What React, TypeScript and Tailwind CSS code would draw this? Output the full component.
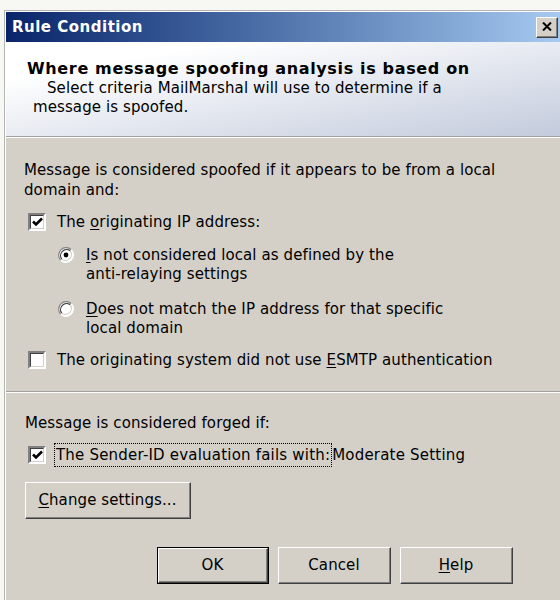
import type { ReactNode } from "react"

// Classic sunken check box
function CheckBox({ checked }: { checked: boolean }) {
  return (
    <div className="w-[18px] h-[18px] shrink-0 border-t-2 border-l-2 border-t-[#808080] border-l-[#808080] border-b-2 border-r-2 border-b-white border-r-white">
      <div className="w-full h-full border-t border-l border-[#404040] border-b border-r border-b-[#d4d0c8] border-r-[#d4d0c8] bg-white flex items-center justify-center">
        {checked && (
          <svg width="11" height="10" viewBox="0 0 11 10">
            <path d="M1 4.5 L4 7.5 L10 1.5" stroke="#000" strokeWidth="2.6" fill="none" />
          </svg>
        )}
      </div>
    </div>
  )
}

function Radio({ checked }: { checked: boolean }) {
  return (
    <svg width="16" height="16" viewBox="0 0 16 16" className="shrink-0">
      <circle cx="8" cy="8" r="7.5" fill="#fff" />
      <path d="M13.3 2.7 A7.5 7.5 0 0 0 2.7 13.3" stroke="#808080" strokeWidth="1.2" fill="none" />
      <path d="M12.2 3.8 A6 6 0 0 0 3.8 12.2" stroke="#404040" strokeWidth="1.2" fill="none" />
      <path d="M2.7 13.3 A7.5 7.5 0 0 0 13.3 2.7" stroke="#fff" strokeWidth="1.2" fill="none" />
      <path d="M3.8 12.2 A6 6 0 0 0 12.2 3.8" stroke="#d4d0c8" strokeWidth="1.2" fill="none" />
      {checked && <circle cx="8" cy="8" r="2.4" fill="#000" />}
    </svg>
  )
}

function Button({ children, isDefault, className }: { children: ReactNode; isDefault?: boolean; className?: string }) {
  return (
    <div className={`h-[37px] ${isDefault ? "border border-black" : ""} ${className ?? ""}`}>
      <div className="h-full border-t border-l border-white border-b border-r border-b-[#404040] border-r-[#404040]">
        <div className="h-full flex items-center justify-center border-b border-r border-b-[#808080] border-r-[#808080] bg-[#d4d0c8]">
          {children}
        </div>
      </div>
    </div>
  )
}

const u = "underline underline-offset-[2px]"

export default function App() {
  return (
    <div className="w-[560px] h-[600px] overflow-hidden bg-[#f7f7f4] pt-[10px] pl-[4px] font-['DejaVu_Sans',sans-serif] text-[15px] tracking-[0.1px] text-black">
      <div className="h-full border-t border-l border-[#b4b4b0] pt-px pl-px bg-white">
        <div className="h-full flex flex-col bg-[#d4d0c8]">
          {/* title bar */}
          <div className="h-[30px] shrink-0 flex items-center justify-between pl-[6px] pr-[2px] bg-gradient-to-r from-[#0a246a] to-[#a6caf0]">
            <span className="text-white font-bold text-[15px] tracking-[0.5px] leading-none">Rule Condition</span>
            <div className="w-[22px] h-[21px] border-t border-l border-white border-b border-r border-b-[#404040] border-r-[#404040]">
              <div className="h-full flex items-center justify-center border-b border-r border-[#808080] border-t-0 border-l-0 bg-[#d4d0c8]">
                <svg width="10" height="9" viewBox="0 0 10 9">
                  <path d="M1 0.5 L9 8.5 M9 0.5 L1 8.5" stroke="#000" strokeWidth="2" />
                </svg>
              </div>
            </div>
          </div>

          {/* header */}
          <div className="h-[94px] shrink-0 bg-gradient-to-br from-white from-20% to-[#c3cbdc] pt-[17px] pl-[21px]">
            <div className="font-bold text-[16px] leading-[20px] tracking-[0.65px]">Where message spoofing analysis is based on</div>
            <div className="pl-[20px] leading-[19px]">
              <div>Select criteria MailMarshal will use to determine if a</div>
              <div className="-ml-[14px]">message is spoofed.</div>
            </div>
          </div>
          <div className="h-px bg-[#a0a0a0]" />
          <div className="h-px bg-white" />

          {/* spoofing options */}
          <div className="pt-[22px] pl-[18px] leading-[20px]">
            <div>Message is considered spoofed if it appears to be from a local</div>
            <div>domain and:</div>

            <div className="mt-[12px] flex items-center gap-[11px] pl-[4px]">
              <CheckBox checked />
              <span>The <span className={u}>o</span>riginating IP address:</span>
            </div>

            <div className="mt-[14px] pl-[34px] flex items-start gap-[12px] leading-[19px]">
              <div className="pt-[1px]"><Radio checked /></div>
              <div>
                <div><span className={u}>I</span>s not considered local as defined by the</div>
                <div>anti-relaying settings</div>
              </div>
            </div>

            <div className="mt-[16px] pl-[34px] flex items-start gap-[12px] leading-[19px]">
              <div className="pt-[1px]"><Radio checked={false} /></div>
              <div>
                <div><span className={u}>D</span>oes not match the IP address for that specific</div>
                <div>local domain</div>
              </div>
            </div>

            <div className="mt-[12px] flex items-center gap-[11px] pl-[4px]">
              <CheckBox checked={false} />
              <span>The originating system did not use <span className={u}>E</span>SMTP authentication</span>
            </div>
          </div>

          <div className="mt-[21px] h-px bg-[#a0a0a0]" />
          <div className="h-px bg-white" />

          {/* forgery options */}
          <div className="pt-[20px] pl-[19px] leading-[20px]">
            <div>Message is considered forged if:</div>
            <div className="mt-[10px] flex items-center gap-[8px] pl-[3px]">
              <CheckBox checked />
              <span className="flex items-center tracking-[0.2px]">
                <span className="border border-dotted border-black px-[1px] leading-[22px]">The Sender-ID evaluation fails with:</span>
                <span>Moderate Setting</span>
              </span>
            </div>
            <Button className="mt-[15px] w-[166px]">
              <span><span className={u}>C</span>hange settings...</span>
            </Button>
          </div>

          <div className="mt-[28px] flex gap-[9px] pl-[151px]">
            <Button isDefault className="w-[112px]">OK</Button>
            <Button className="w-[113px]">Cancel</Button>
            <Button className="w-[113px]"><span><span className={u}>H</span>elp</span></Button>
          </div>
        </div>
      </div>
    </div>
  )
}
